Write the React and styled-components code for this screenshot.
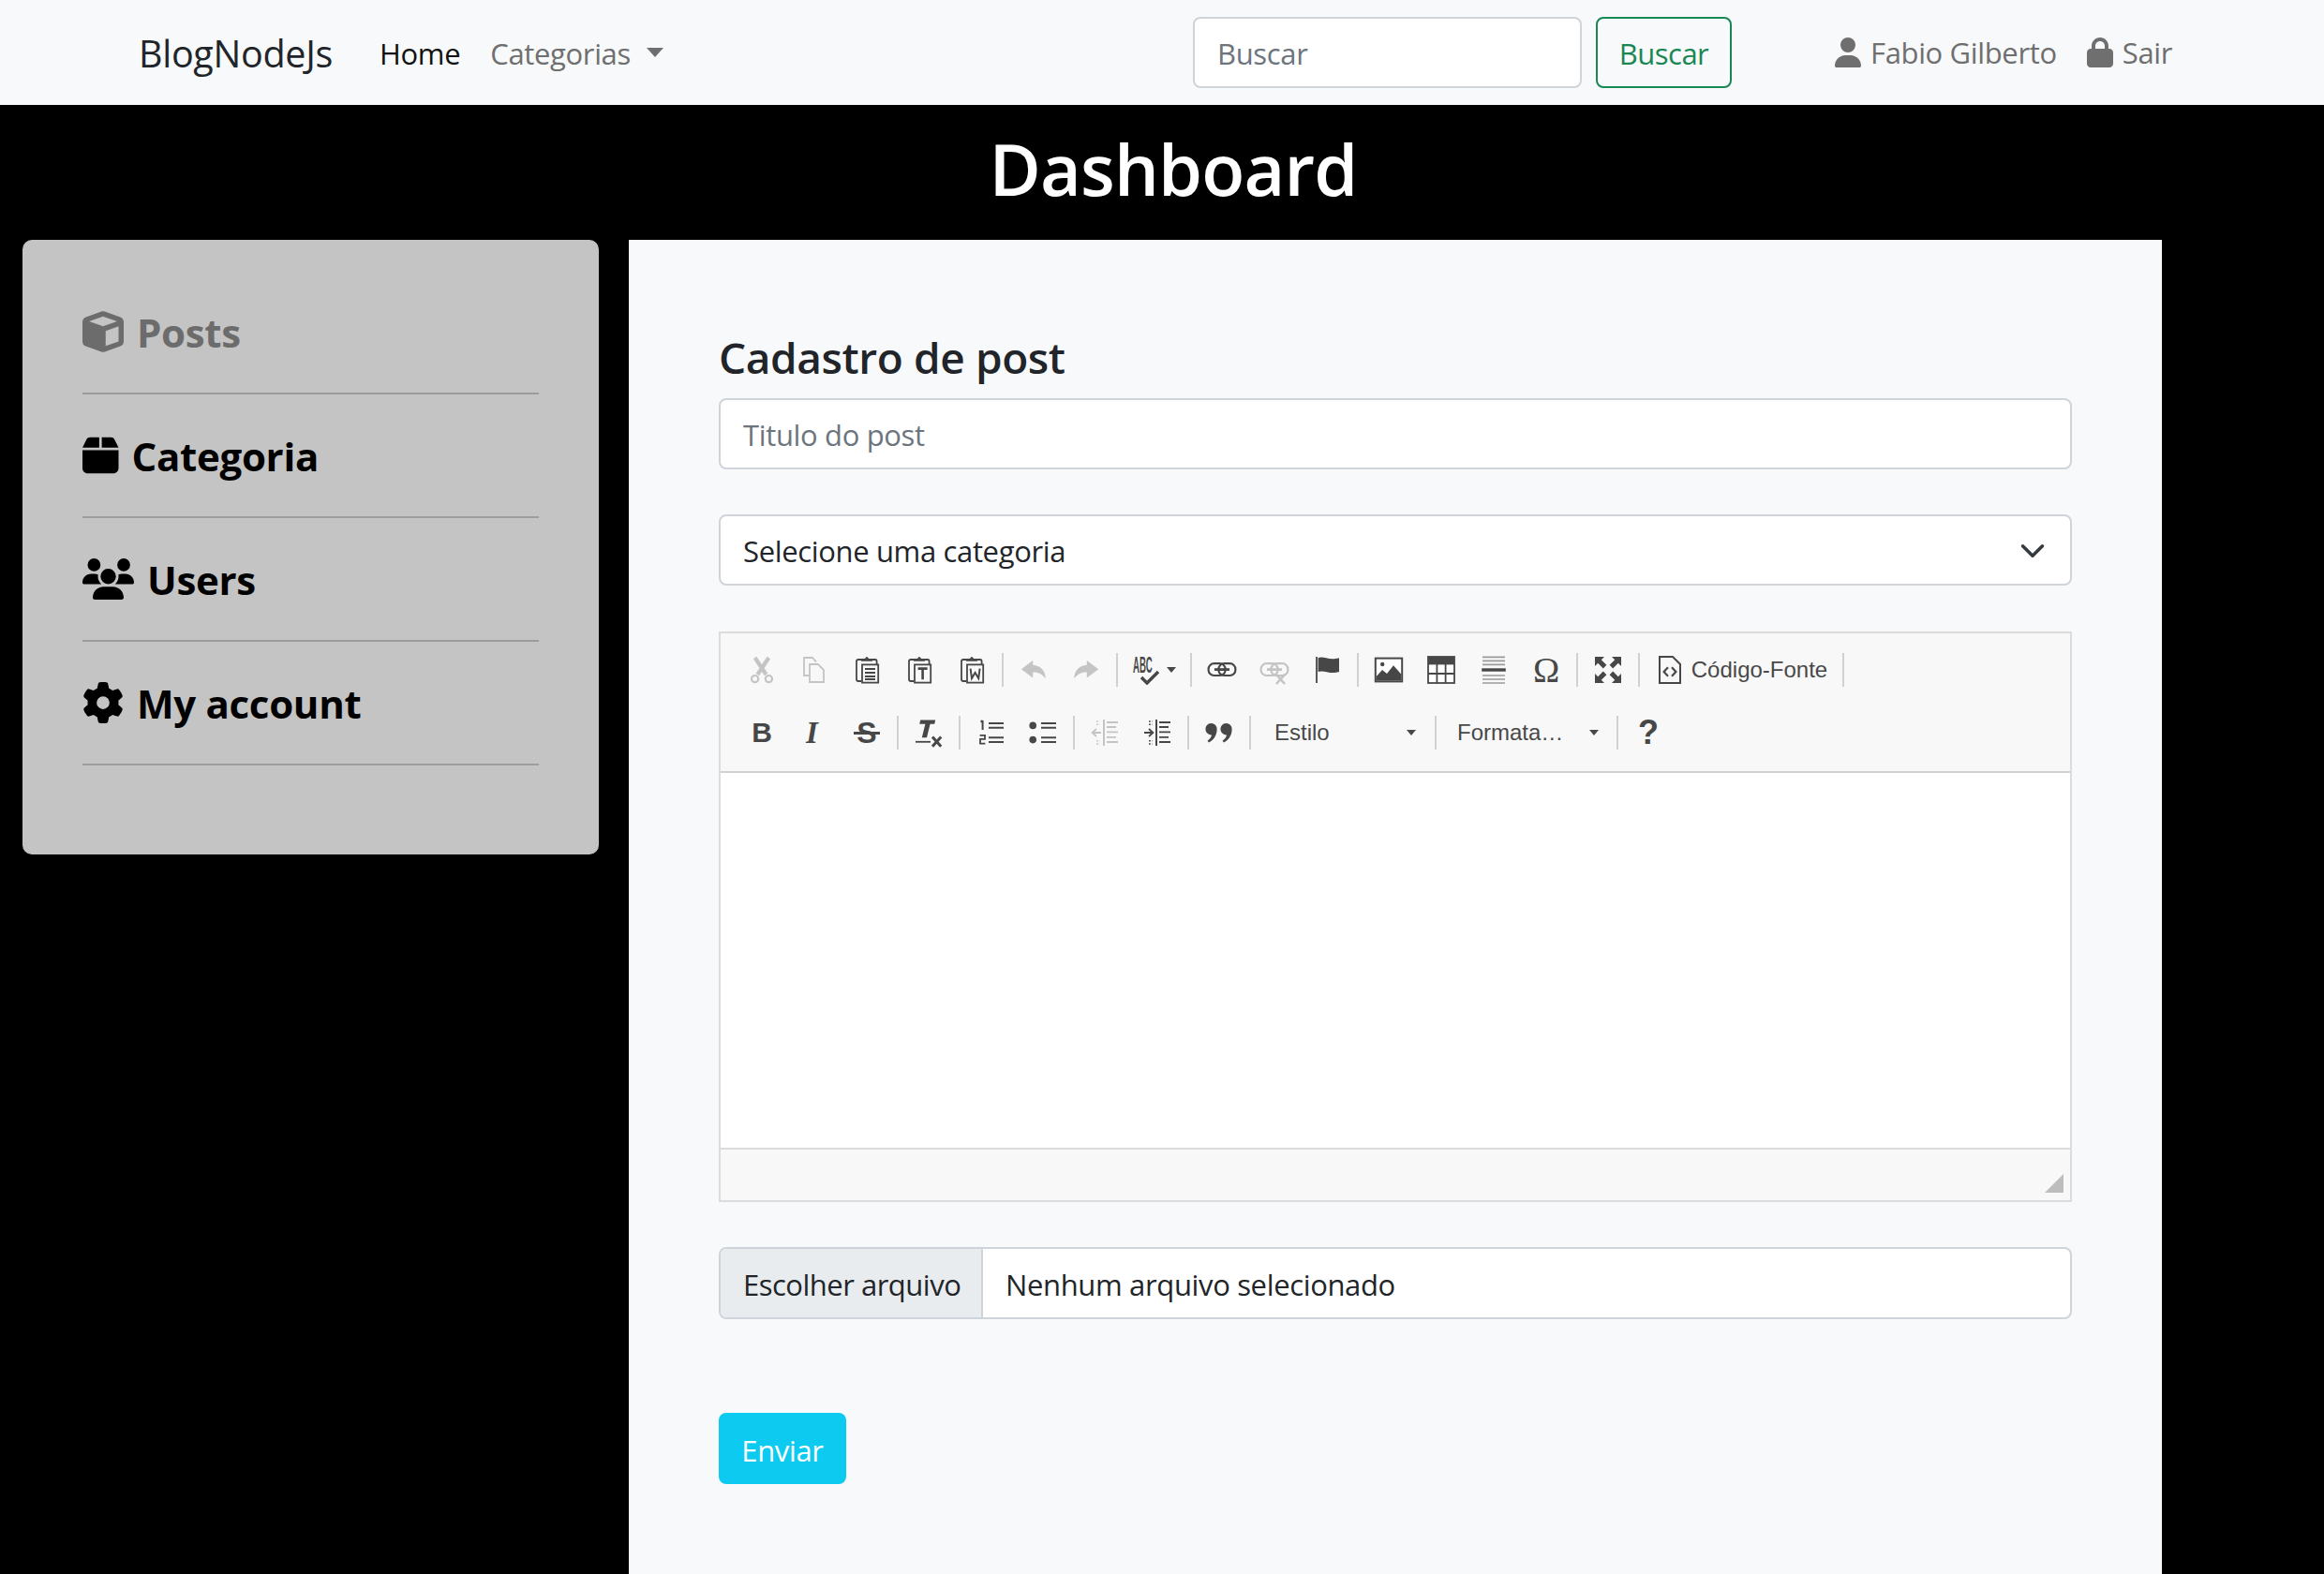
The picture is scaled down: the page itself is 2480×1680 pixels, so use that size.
import React from 'react';
import styled, { createGlobalStyle } from 'styled-components';
import { FaBox, FaCube, FaGear, FaLock, FaUser, FaUsers } from 'react-icons/fa6';

const GlobalStyle = createGlobalStyle`
  html, body { margin: 0; padding: 0; background: #000; }
  body { font-family: "Open Sans", "Noto Sans", sans-serif; color: #212529; }
  * { box-sizing: border-box; }
`;

const Page = styled.div`
  width: 2480px;
  height: 1680px;
  overflow: hidden;
  background: #000;
`;

/* navbar */
const Navbar = styled.nav`
  height: 112px;
  background: #f8f9fa;
  display: flex;
  align-items: center;
  padding-left: 148px;
`;
const NavLeft = styled.div`
  width: 1125px;
  display: flex;
  align-items: center;
`;
const Brand = styled.span`
  font-size: 39.5px;
  letter-spacing: -0.3px;
  width: 241px;
  padding-top: 2px;
  color: #212529;
  margin-right: 16px;
`;
const NavLink = styled.span`
  font-size: 31px;
  letter-spacing: -0.35px;
  padding-top: 2px;
  color: ${(p) => (p.$active ? '#111' : '#6f6f6f')};
  margin-right: ${(p) => p.$gap || 0}px;
  display: flex;
  align-items: center;
`;
const Caret = styled.i`
  display: block;
  margin-left: 17px;
  margin-top: -2px;
  border-top: 10px solid #6f6f6f;
  border-left: 9px solid transparent;
  border-right: 9px solid transparent;
`;
const SearchForm = styled.form`
  width: 575px;
  margin-right: 110px;
  display: flex;
  gap: 15px;
`;
const TextInput = styled.input`
  display: block;
  height: 76px;
  width: ${(p) => p.$width || '100%'};
  border: 2px solid #ced4da;
  border-radius: 8px;
  background: #fff;
  padding: 2px 24px 0;
  font: 31px "Open Sans", sans-serif;
  letter-spacing: -0.35px;
  outline: none;
  &::placeholder { color: #6c757d; opacity: 1; }
`;
const SearchButton = styled.button`
  width: 145px;
  height: 76px;
  border: 2px solid #198754;
  border-radius: 8px;
  background: transparent;
  color: #198754;
  font: 31px "Open Sans", sans-serif;
  letter-spacing: -0.5px;
  padding: 2px 0 0;
`;
const UserLink = styled.span`
  font-size: 31px;
  letter-spacing: -0.35px;
  color: #6f6f6f;
  display: flex;
  align-items: center;
  gap: 10px;
  margin-right: ${(p) => p.$gap || 0}px;
  svg { width: 28px; height: 32px; flex: none; }
`;

/* title */
const Title = styled.h1`
  margin: 0;
  height: 144px;
  padding: 0 0 10px 24px;
  display: flex;
  align-items: center;
  justify-content: center;
  color: #fff;
  font-size: 75.5px;
  font-weight: 600;
  letter-spacing: -0.8px;
`;

/* sidebar */
const Body = styled.div`
  display: flex;
  align-items: flex-start;
  padding-left: 24px;
  gap: 32px;
`;
const Sidebar = styled.aside`
  width: 615px;
  height: 656px;
  background: #c4c4c4;
  border-radius: 10px;
  padding: 33px 64px 0;
`;
const SideItem = styled.div`
  height: 132px;
  display: flex;
  align-items: center;
  gap: 14px;
  border-bottom: 2px solid #9d9d9d;
  font-size: 42px;
  font-weight: 700;
  letter-spacing: -0.3px;
  color: ${(p) => (p.$muted ? '#6c6c6c' : '#000')};
  svg { height: 44px; width: ${(p) => p.$iconWidth || 44}px; flex: none; }
`;

/* form panel */
const Panel = styled.main`
  width: 1636px;
  height: 1424px;
  background: #f8f9fa;
  padding: 96px 96px 0 96px;
`;
const Heading = styled.h4`
  margin: 0 0 15px;
  font-size: 46px;
  line-height: 58px;
  font-weight: 600;
  letter-spacing: -0.4px;
  color: #212529;
`;
const SelectBox = styled.div`
  margin-top: 48px;
  height: 76px;
  border: 2px solid #ced4da;
  border-radius: 8px;
  background: #fff;
  padding: 2px 26px 0 24px;
  display: flex;
  align-items: center;
  justify-content: space-between;
  font-size: 31px;
  letter-spacing: -0.35px;
`;

/* editor */
const Editor = styled.div`
  margin-top: 49px;
  height: 609px;
  border: 2px solid #dcdcdc;
  display: flex;
  flex-direction: column;
  background: #fff;
`;
const Toolbar = styled.div`
  background: #f8f8f8;
  border-bottom: 2px solid #d1d1d1;
  padding: 11px 16px 13px;
  display: flex;
  flex-direction: column;
  gap: 11px;
`;
const ToolRow = styled.div`
  height: 56px;
  display: flex;
  align-items: center;
`;
const ToolButton = styled.span`
  width: ${(p) => p.$width || 56}px;
  height: 56px;
  flex: none;
  display: flex;
  align-items: center;
  justify-content: center;
  gap: ${(p) => p.$gap || 0}px;
  svg { width: 32px; height: 32px; flex: none; display: block; }
`;
const ToolLabel = styled.span`
  font: 24px "Liberation Sans", Arial, sans-serif;
  color: #484848;
`;
const ToolGlyph = styled.span`
  font-family: ${(p) => (p.$serif ? '"Liberation Serif", serif' : '"Liberation Sans", sans-serif')};
  font-size: ${(p) => p.$size}px;
  font-weight: ${(p) => p.$weight || 700};
  font-style: ${(p) => (p.$italic ? 'italic' : 'normal')};
  margin-right: ${(p) => p.$shift || 0}px;
  line-height: 1;
  color: #474747;
`;
const StruckGlyph = styled(ToolGlyph)`
  position: relative;
  &::after {
    content: '';
    position: absolute;
    left: -3px;
    right: -3px;
    top: 15px;
    height: 3px;
    background: #474747;
  }
`;
const SpellMark = styled.span`
  width: 32px;
  height: 34px;
  flex: none;
  display: flex;
  flex-direction: column;
  align-items: flex-start;
  svg { width: 22px; height: 16px; margin: -4px 0 0 7px; }
`;
const SpellText = styled.span`
  display: block;
  width: 19px;
  margin-top: 3px;
  white-space: nowrap;
  font: 700 24px/18px "Liberation Sans", sans-serif;
  color: #474747;
  transform: scaleX(0.4);
  transform-origin: 0 50%;
`;
const ToolSep = styled.i`
  display: block;
  flex: none;
  width: 2px;
  height: 36px;
  margin: 0 4px;
  background: #d1d1d1;
`;
const ToolArrow = styled.i`
  display: block;
  flex: none;
  border-top: 6px solid #484848;
  border-left: 5px solid transparent;
  border-right: 5px solid transparent;
`;
const Combo = styled.span`
  width: ${(p) => p.$width}px;
  height: 56px;
  flex: none;
  padding: 0 ${(p) => p.$right}px 0 ${(p) => p.$left}px;
  display: flex;
  align-items: center;
  justify-content: space-between;
`;
const EditArea = styled.div`
  flex: 1;
  background: #fff;
`;
const EditorFooter = styled.div`
  height: 56px;
  flex: none;
  background: #f8f8f8;
  border-top: 2px solid #dcdcdc;
  padding: 0 7px 8px 0;
  display: flex;
  align-items: flex-end;
  justify-content: flex-end;
`;
const ResizeGrip = styled.i`
  display: block;
  border-bottom: 20px solid #bdbdbd;
  border-left: 20px solid transparent;
`;

/* file + submit */
const FileField = styled.div`
  margin-top: 48px;
  height: 77px;
  border: 2px solid #ced4da;
  border-radius: 8px;
  background: #fff;
  display: flex;
  align-items: stretch;
  overflow: hidden;
  font-size: 31px;
  letter-spacing: -0.35px;
`;
const FileButton = styled.span`
  width: 280px;
  background: #e9ecef;
  border-right: 2px solid #ced4da;
  display: flex;
  align-items: center;
  padding: 3px 0 0 24px;
  letter-spacing: -0.5px;
`;
const FileName = styled.span`
  display: flex;
  align-items: center;
  padding: 3px 0 0 24px;
`;
const SubmitButton = styled.button`
  display: block;
  margin-top: 100px;
  width: 136px;
  height: 76px;
  border: none;
  border-radius: 8px;
  background: #0dcaf0;
  color: #fff;
  font: 31px "Open Sans", sans-serif;
  letter-spacing: -0.35px;
  padding: 3px 0 0;
`;

/* CKEditor toolbar drawings, 16 unit grid */
const DARK = '#474747';
const OFF = '#c4c4c4';

const Icon = ({ children }) => <svg viewBox="0 0 16 16">{children}</svg>;

const Cut = () => (
  <Icon>
    <g stroke={OFF} fill="none">
      <path d="M4.3 1.5L10.3 10.5M11.7 1.5L5.7 10.5" strokeWidth="2.1" />
      <circle cx="4.3" cy="12.8" r="1.8" strokeWidth="1.1" />
      <circle cx="11.7" cy="12.8" r="1.8" strokeWidth="1.1" />
    </g>
  </Icon>
);
const Copy = () => (
  <Icon>
    <g stroke={OFF} fill="none" strokeWidth="0.9">
      <path d="M5 11H2.5V1.5h4.5L9 3.8" />
      <path d="M5.5 5h4.5l3 3v6.5H5.5z" />
    </g>
  </Icon>
);
const PasteBase = ({ children }) => (
  <Icon>
    <path d="M5 2.5H3.5Q2.5 2.5 2.5 3.5V13Q2.5 14 3.5 14H5M11 2.5H12.5Q13.3 2.5 13.3 3.5V5" fill="none" stroke={DARK} strokeWidth="0.9" />
    <path d="M5 3V2H7Q8 0 9 2H11V3.4H5z" fill={DARK} />
    <rect x="5.5" y="5.2" width="8.6" height="9.6" fill="#fafafa" stroke={DARK} strokeWidth="0.9" />
    {children}
  </Icon>
);
const Paste = () => (
  <PasteBase>
    <path d="M7 7.5h5.5M7 9.5h5.5M7 11.5h5.5M7 13h5.5" stroke={DARK} strokeWidth="0.9" />
  </PasteBase>
);
const PasteText = () => (
  <PasteBase>
    <path d="M7.3 7.3h5M9.8 7.3v5.8" stroke={DARK} strokeWidth="1.3" fill="none" />
  </PasteBase>
);
const PasteWord = () => (
  <PasteBase>
    <path d="M7.3 7.3L8 12.5L9.8 9.5L11.6 12.5L12.3 7.3" stroke={DARK} strokeWidth="1" fill="none" />
  </PasteBase>
);
const Undo = ({ flip }) => (
  <Icon>
    <path
      d="M7.6 3L1.4 7.6L7.6 12.2V9.3C10.4 9.1 12.6 10.2 14.4 12.8C14.4 8.4 11.5 5.6 7.6 5.4z"
      fill={OFF}
      transform={flip ? 'translate(16 0) scale(-1 1)' : undefined}
    />
  </Icon>
);
const Spell = () => (
  <SpellMark>
    <SpellText>ABC</SpellText>
    <svg viewBox="0 0 22 16">
      <path d="M2 8L8 14L20 2" fill="none" stroke={DARK} strokeWidth="3.4" />
    </svg>
  </SpellMark>
);
const Link = ({ off }) => {
  const c = off ? OFF : DARK;
  return (
    <Icon>
      <g fill="none" stroke={c} strokeWidth="1.1">
        <rect x="0.8" y="4.6" width="9" height="6.4" rx="3" />
        <rect x="6.2" y="4.6" width="9" height="6.4" rx="3" />
        <path d="M4 7.8h8" strokeWidth="1.4" />
      </g>
      {off && <path d="M9 10.5l4.5 5M13.5 10.5l-4.5 5" stroke={c} strokeWidth="1.3" />}
    </Icon>
  );
};
const Flag = () => (
  <Icon>
    <path d="M2.5 1v14" stroke={DARK} strokeWidth="0.9" />
    <path d="M3.3 1.6C6 .4 9 3.2 14.5 1.6V9C9.5 10.6 6.5 7.8 3.3 9z" fill={DARK} />
  </Icon>
);
const Picture = () => (
  <Icon>
    <rect x="0.9" y="1.8" width="14.2" height="12.4" fill="#fff" stroke={DARK} strokeWidth="1" />
    <circle cx="4.6" cy="5" r="1.1" fill={DARK} />
    <path d="M1.4 13.7V11.5L4.5 8L7 10L10.5 5.6L14.6 10.2V13.7z" fill={DARK} />
  </Icon>
);
const Table = () => (
  <Icon>
    <rect x="1" y="1" width="14" height="14" fill="#fff" stroke={DARK} strokeWidth="0.9" />
    <rect x="1" y="1" width="14" height="4.2" fill={DARK} />
    <path d="M1 10h14M5.7 5v10M10.3 5v10" stroke={DARK} strokeWidth="0.9" />
  </Icon>
);
const Rule = () => (
  <Icon>
    <path d="M2 1.2h12M2 3.2h12M2 5.2h12M2 11h12M2 13h12M2 15h12" stroke="#9a9a9a" strokeWidth="0.8" />
    <path d="M1.6 8h12.8" stroke={DARK} strokeWidth="1.7" />
  </Icon>
);
const Maximize = () => (
  <Icon>
    <path
      d="M1 1h5L4.4 2.6L7.2 5.4L5.4 7.2L2.6 4.4L1 6zM15 1v5L13.4 4.4L10.6 7.2L8.8 5.4L11.6 2.6L10 1zM1 15v-5l1.6 1.6L5.4 8.8L7.2 10.6L4.4 13.4L6 15zM15 15h-5l1.6-1.6L8.8 10.6L10.6 8.8L13.4 11.6L15 10z"
      fill={DARK}
    />
  </Icon>
);
const Source = () => (
  <Icon>
    <path d="M2.5 1h7l4 4v10h-11z" fill="none" stroke={DARK} strokeWidth="1" />
    <path d="M7 6.6L4.8 9L7 11.4M9 6.6L11.2 9L9 11.4" fill="none" stroke={DARK} strokeWidth="1.1" />
  </Icon>
);
const RemoveFormat = () => (
  <Icon>
    <path d="M3.6 1.2H11.6L11.1 3.4H8.8L7 10.6H4.4L6.2 3.4H3.1z" fill={DARK} />
    <path d="M1 12.9h8" stroke={DARK} strokeWidth="0.9" />
    <path d="M10 10.2l4.6 5.2M14.6 10.2l-4.6 5.2" stroke={DARK} strokeWidth="1.5" />
  </Icon>
);
const ListLines = () => <path d="M7 3h8M7 5.4h8M7 10.6h8M7 13h8" stroke={DARK} strokeWidth="1" />;
const Numbered = () => (
  <Icon>
    <ListLines />
    <path d="M3.8 1.5v5M2.8 2.3l1-.8" stroke={DARK} strokeWidth="1" fill="none" />
    <path d="M2.3 9.4H5V11.4H2.5V13.8H5.2" stroke={DARK} strokeWidth="0.9" fill="none" />
  </Icon>
);
const Bulleted = () => (
  <Icon>
    <ListLines />
    <circle cx="2.6" cy="4.2" r="1.9" fill={DARK} />
    <circle cx="2.6" cy="11.8" r="1.9" fill={DARK} />
  </Icon>
);
const Indent = ({ off }) => {
  const c = off ? OFF : DARK;
  return (
    <Icon>
      <path d="M7.5 1v14" stroke={c} strokeWidth="1" />
      <path d="M9 2.5h6M9 5h5M9 7.7h6M9 10.4h5M9 13h6" stroke={c} strokeWidth="0.9" />
      {off ? (
        <path d="M6 8H1.5M3.5 6L1.3 8L3.5 10" stroke={c} strokeWidth="0.9" fill="none" />
      ) : (
        <path d="M1 8H5.5M3.5 6L5.7 8L3.5 10" stroke={c} strokeWidth="0.9" fill="none" />
      )}
      <path d="M3.5 2h2M3.5 3.6h2M3.5 12.4h2M3.5 14h2" stroke={c} strokeWidth="0.8" strokeDasharray="0.9 0.9" />
    </Icon>
  );
};
const Quote = () => (
  <Icon>
    <path
      d="M3.6 3A3 3 0 0 1 6.8 6.2C6.8 9.4 5 12 2.4 13.2L1.8 12.3C3 11.4 3.8 10.3 4 9.2A3 3 0 1 1 3.6 3zM11.6 3A3 3 0 0 1 14.8 6.2C14.8 9.4 13 12 10.4 13.2L9.8 12.3C11 11.4 11.8 10.3 12 9.2A3 3 0 1 1 11.6 3z"
      fill={DARK}
    />
  </Icon>
);

const Btn = ({ children }) => <ToolButton>{children}</ToolButton>;

const Chevron = () => (
  <svg width="28" height="28" viewBox="0 0 16 16">
    <path d="M2 5l6 6 6-6" fill="none" stroke="#343a40" strokeWidth="2" strokeLinecap="round" strokeLinejoin="round" />
  </svg>
);

const App = () => (
  <Page>
    <GlobalStyle />
    <Navbar>
      <NavLeft>
        <Brand>BlogNodeJs</Brand>
        <NavLink $active $gap={32}>Home</NavLink>
        <NavLink>Categorias<Caret /></NavLink>
      </NavLeft>
      <SearchForm>
        <TextInput placeholder="Buscar" $width="415px" />
        <SearchButton type="button">Buscar</SearchButton>
      </SearchForm>
      <UserLink $gap={32}><FaUser />Fabio Gilberto</UserLink>
      <UserLink><FaLock />Sair</UserLink>
    </Navbar>

    <Title>Dashboard</Title>

    <Body>
      <Sidebar>
        <SideItem $muted><FaCube />Posts</SideItem>
        <SideItem $iconWidth={38.5}><FaBox />Categoria</SideItem>
        <SideItem $iconWidth={55}><FaUsers />Users</SideItem>
        <SideItem><FaGear />My account</SideItem>
      </Sidebar>

      <Panel>
        <Heading>Cadastro de post</Heading>
        <TextInput placeholder="Titulo do post" />
        <SelectBox>Selecione uma categoria<Chevron /></SelectBox>

        <Editor>
          <Toolbar>
            <ToolRow>
              <Btn><Cut /></Btn>
              <Btn><Copy /></Btn>
              <Btn><Paste /></Btn>
              <Btn><PasteText /></Btn>
              <Btn><PasteWord /></Btn>
              <ToolSep />
              <Btn><Undo /></Btn>
              <Btn><Undo flip /></Btn>
              <ToolSep />
              <ToolButton $width={69} $gap={4}><Spell /><ToolArrow /></ToolButton>
              <ToolSep />
              <Btn><Link /></Btn>
              <Btn><Link off /></Btn>
              <Btn><Flag /></Btn>
              <ToolSep />
              <Btn><Picture /></Btn>
              <Btn><Table /></Btn>
              <Btn><Rule /></Btn>
              <Btn><ToolGlyph $serif $size={38} $weight={400}>Ω</ToolGlyph></Btn>
              <ToolSep />
              <Btn><Maximize /></Btn>
              <ToolSep />
              <ToolButton $width={208} $gap={7}><Source /><ToolLabel>Código-Fonte</ToolLabel></ToolButton>
              <ToolSep />
            </ToolRow>
            <ToolRow>
              <Btn><ToolGlyph $size={30}>B</ToolGlyph></Btn>
              <Btn><ToolGlyph $serif $italic $size={33} $shift={5}>I</ToolGlyph></Btn>
              <Btn><StruckGlyph $size={32}>S</StruckGlyph></Btn>
              <ToolSep />
              <Btn><RemoveFormat /></Btn>
              <ToolSep />
              <Btn><Numbered /></Btn>
              <Btn><Bulleted /></Btn>
              <ToolSep />
              <Btn><Indent off /></Btn>
              <Btn><Indent /></Btn>
              <ToolSep />
              <Btn><Quote /></Btn>
              <ToolSep />
              <Combo $width={188} $left={21} $right={16}><ToolLabel>Estilo</ToolLabel><ToolArrow /></Combo>
              <ToolSep />
              <Combo $width={184} $left={18} $right={15}><ToolLabel>Formata…</ToolLabel><ToolArrow /></Combo>
              <ToolSep />
              <Btn><ToolGlyph $size={36}>?</ToolGlyph></Btn>
            </ToolRow>
          </Toolbar>
          <EditArea />
          <EditorFooter><ResizeGrip /></EditorFooter>
        </Editor>

        <FileField>
          <FileButton>Escolher arquivo</FileButton>
          <FileName>Nenhum arquivo selecionado</FileName>
        </FileField>

        <SubmitButton type="button">Enviar</SubmitButton>
      </Panel>
    </Body>
  </Page>
);

export default App;
